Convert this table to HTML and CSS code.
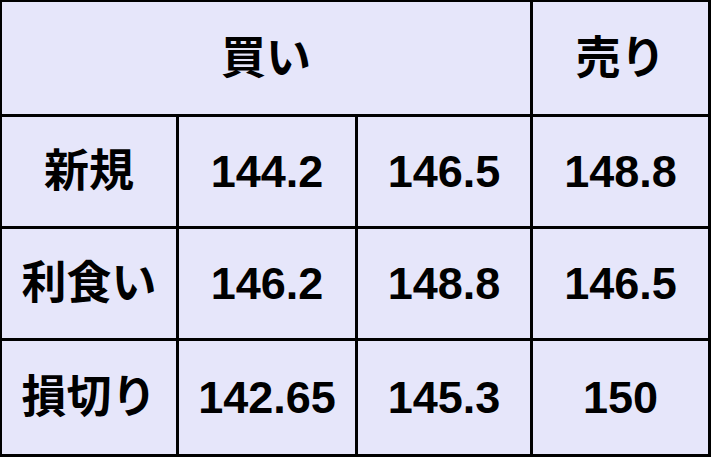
FILE: index.html
```html
<!DOCTYPE html>
<html lang="ja">
<head>
<meta charset="utf-8">
<link rel="stylesheet" href="styles.css">
</head>
<body>
<div class="grid">
  <div class="cell head-buy">買い</div>
  <div class="cell">売り</div>
  <div class="cell">新規</div>
  <div class="cell num">144.2</div>
  <div class="cell num">146.5</div>
  <div class="cell num">148.8</div>
  <div class="cell">利食い</div>
  <div class="cell num">146.2</div>
  <div class="cell num">148.8</div>
  <div class="cell num">146.5</div>
  <div class="cell">損切り</div>
  <div class="cell num">142.65</div>
  <div class="cell num">145.3</div>
  <div class="cell num">150</div>
</div>
</body>
</html>
```
FILE: styles.css
```css
html, body {
  margin: 0;
  padding: 0;
  background: #e6e6fa;
}
.grid {
  width: 711px;
  height: 457px;
  box-sizing: border-box;
  background: #000;
  padding: 2px 3px 3px 2px;
  display: grid;
  grid-template-columns: 174px 176px 172px 175px;
  grid-template-rows: 112px 109px 109px 113px;
  gap: 3px;
}
.cell {
  background: #e6e6fa;
  display: flex;
  align-items: center;
  justify-content: center;
  font-family: "Liberation Sans", "Noto Sans CJK JP", sans-serif;
  font-weight: bold;
  font-size: 45px;
  color: #000;
  line-height: 1;
}
.head-buy {
  grid-column: 1 / 4;
}
```
